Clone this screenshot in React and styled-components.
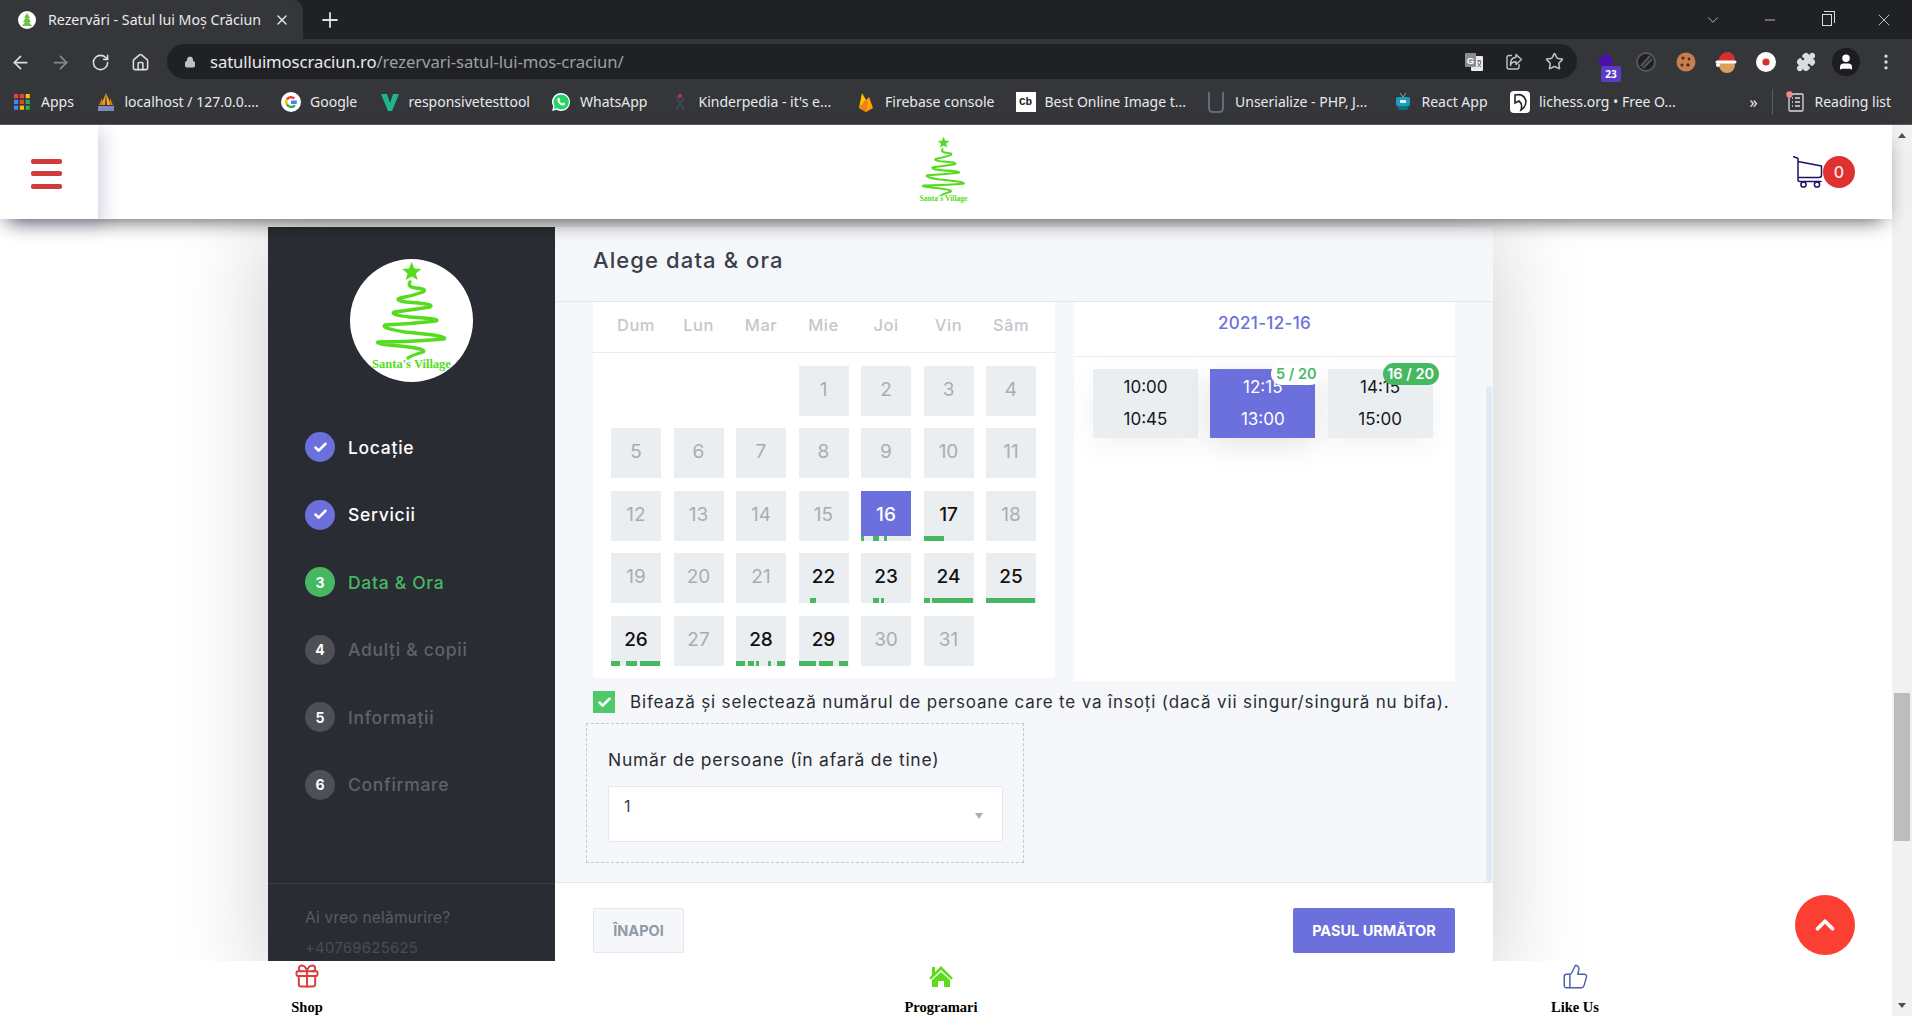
import React from "react";
import styled, { createGlobalStyle } from "styled-components";
import {
  ArrowLeft,
  ArrowRight,
  RotateCw,
  Home,
  Lock,
  Star,
  Puzzle,
  User,
  MoreVertical,
  ChevronDown,
  ChevronUp,
  Minus,
  X,
  Plus,
  Gift,
  ThumbsUp,
  Check,
} from "lucide-react";

const PURPLE = "#6c70dc";
const GREEN = "#47b862";
const CELL = "#ebeef1";
const UI_FONT = '"Inter", "Liberation Sans", sans-serif';
const CHROME_FONT = '"Noto Sans", "Liberation Sans", sans-serif';

const GlobalStyle = createGlobalStyle`
  html, body {
    margin: 0;
    height: 100%;
    overflow: hidden;
    background: #fff;
  }
  * { box-sizing: border-box; }
`;

const Shell = styled.div`
  display: flex;
  flex-direction: column;
  width: 1912px;
  height: 1016px;
  font-family: ${UI_FONT};
`;

/* browser chrome */
const TabStrip = styled.div`
  display: flex;
  align-items: center;
  height: 39px;
  background: #202124;
  color: #e8eaed;
  font-family: ${CHROME_FONT};
`;

const Tab = styled.div`
  display: flex;
  align-items: center;
  width: 303px;
  height: 39px;
  padding-left: 18px;
  background: #35363a;
  border-radius: 0 10px 0 0;
`;

const TabTitle = styled.span`
  width: 213px;
  margin-left: 12px;
  font-size: 14.2px;
  white-space: nowrap;
`;

const TabClose = styled.span`
  display: flex;
  margin-left: 13px;
`;

const NewTab = styled.span`
  display: flex;
  margin-left: 15px;
  color: #dfe1e5;
`;

const WindowControls = styled.div`
  display: flex;
  margin-left: auto;
`;

const WindowButton = styled.span`
  display: flex;
  align-items: center;
  justify-content: center;
  width: 57px;
  height: 28px;
  color: #dadce0;
`;

const RestoreIcon = styled.span`
  position: relative;
  width: 10px;
  height: 12px;
  border: 1.2px solid #dadce0;
  &::before {
    content: "";
    position: absolute;
    top: -4px;
    left: 1px;
    width: 10px;
    height: 11px;
    border-top: 1.2px solid #dadce0;
    border-right: 1.2px solid #dadce0;
  }
`;

const Toolbar = styled.div`
  display: flex;
  height: 40px;
  background: #35363a;
  color: #dadce0;
  font-family: ${CHROME_FONT};
`;

const NavButton = styled.span`
  display: flex;
  align-items: center;
  justify-content: center;
  flex: none;
  width: 40px;
  height: 46px;
  color: ${(p) => (p.$dim ? "#85888d" : "#dadce0")};
`;

const AddressPill = styled.div`
  display: flex;
  align-items: center;
  width: 1410px;
  height: 35px;
  margin: 5px 0 0 7px;
  padding: 0 3px 0 17px;
  background: #202124;
  border-radius: 18px;
`;

const Url = styled.div`
  margin-left: 14px;
  font-size: 16.7px;
  color: #9aa0a6;
  white-space: nowrap;
  letter-spacing: -0.1px;
  b {
    font-weight: 400;
    color: #e8eaed;
  }
`;

const PillActions = styled.div`
  display: flex;
  margin-left: auto;
`;

const PillButton = styled.span`
  display: flex;
  align-items: center;
  justify-content: center;
  width: 40px;
  color: #bdc1c6;
`;

const Extensions = styled.div`
  display: flex;
  margin-left: 9px;
`;

const ExtButton = styled.span`
  position: relative;
  display: flex;
  align-items: center;
  justify-content: center;
  width: 40px;
  height: 46px;
`;

const ExtBadge = styled.span`
  position: absolute;
  top: 27px;
  left: 15px;
  width: 20px;
  height: 16px;
  background: #5b3cc4;
  border-radius: 2px;
  color: #fff;
  font: 700 10px/16px ${CHROME_FONT};
  text-align: center;
`;

const Avatar = styled.span`
  display: flex;
  align-items: center;
  justify-content: center;
  width: 28px;
  height: 28px;
  border-radius: 50%;
  background: #1c1d20;
  color: #fff;
`;

const Bookmarks = styled.div`
  display: flex;
  align-items: center;
  gap: 21.5px;
  height: 46px;
  padding-left: 12px;
  background: #35363a;
  border-bottom: 1px solid #5c5d61;
  color: #e8eaed;
  font-family: ${CHROME_FONT};
`;

const Bookmark = styled.div`
  display: flex;
  align-items: center;
  gap: 9px;
`;

const BookmarkLabel = styled.span`
  display: block;
  width: ${(p) => p.$w}px;
  font-size: 14px;
  white-space: nowrap;
`;

const ReadingLabel = styled(BookmarkLabel)`
  margin-left: 9px;
`;

const BookmarkIcon = styled.span`
  display: flex;
  align-items: center;
  justify-content: center;
  flex: none;
  width: 20px;
  height: 20px;
`;

const CbIcon = styled.span`
  width: 20px;
  height: 20px;
  background: #fff;
  color: #222;
  font: 700 11px/20px "Liberation Mono", monospace;
  text-align: center;
`;

const ReadingList = styled.div`
  display: flex;
  align-items: center;
  margin-left: 46px;
`;

const More = styled.span`
  width: 18px;
  font-size: 16px;
  text-align: center;
`;

const BarSeparator = styled.span`
  width: 1px;
  height: 26px;
  margin: 0 13px 0 9px;
  background: #5c5d61;
`;

/* page */
const Content = styled.div`
  display: flex;
  flex: 1;
  min-height: 0;
`;

const Page = styled.div`
  position: relative;
  display: flex;
  flex-direction: column;
  flex: 1;
  min-width: 0;
  background: #fff;
`;

const SiteHeader = styled.header`
  position: relative;
  z-index: 3;
  display: grid;
  grid-template-columns: 1fr 75px 1fr;
  align-items: center;
  height: 94px;
  padding-right: 5px;
  background: #fff;
  box-shadow: 0 9px 20px -9px rgba(0, 0, 0, 0.75);
`;

const MenuButton = styled.div`
  display: flex;
  flex-direction: column;
  justify-content: center;
  gap: 7.5px;
  width: 98px;
  height: 94px;
  padding: 3px 0 0 31px;
  background: #fff;
  box-shadow: 6px 6px 16px rgba(70, 70, 140, 0.22);
`;

const MenuBar = styled.span`
  width: 31px;
  height: 5px;
  background: #d33a3a;
  border-radius: 2px;
`;

const CartWrap = styled.div`
  display: flex;
  align-items: center;
  justify-self: end;
  margin-right: 32px;
`;

const CartCount = styled.span`
  width: 32px;
  height: 32px;
  border-radius: 50%;
  background: #e03131;
  color: #fbe9e9;
  font-size: 16px;
  font-weight: 500;
  line-height: 32px;
  text-align: center;
`;

const Stage = styled.main`
  flex: 1;
  min-height: 0;
  padding: 8px 0 0 268px;
  overflow: hidden;
`;

const Wizard = styled.div`
  display: grid;
  grid-template-columns: 287px 938px;
  width: 1225px;
  height: 760px;
  box-shadow: 0 0 90px rgba(0, 0, 0, 0.2);
`;

const Sidebar = styled.aside`
  display: flex;
  flex-direction: column;
  background: #292c32;
`;

const SideLogo = styled.div`
  width: 123px;
  height: 123px;
  margin: 32px auto 0;
  border-radius: 50%;
  background: #fff;
`;

const Steps = styled.ol`
  display: flex;
  flex-direction: column;
  gap: 37.6px;
  margin: 50px 0 0;
  padding: 0 0 0 37px;
  list-style: none;
`;

const StepRow = styled.li`
  display: flex;
  align-items: center;
  gap: 13px;
  height: 30px;
`;

const stepDot = { done: PURPLE, current: GREEN, todo: "#4d5056" };
const stepText = { done: "#ffffff", current: GREEN, todo: "#5f636b" };

const StepDot = styled.span`
  display: flex;
  align-items: center;
  justify-content: center;
  width: 30px;
  height: 30px;
  border-radius: 50%;
  background: ${(p) => stepDot[p.$state]};
  color: #fff;
  font-size: 14px;
  font-weight: 700;
`;

const StepLabel = styled.span`
  color: ${(p) => stepText[p.$state]};
  font-size: 17.5px;
  font-weight: 500;
  letter-spacing: 0.7px;
`;

const SideFooter = styled.div`
  height: 104px;
  margin-top: auto;
  padding: 23px 0 0 37px;
  border-top: 1px solid #3c3f45;
`;

const HelpTitle = styled.div`
  color: #585c64;
  font-size: 15.5px;
  letter-spacing: 0.2px;
  line-height: 22px;
`;

const HelpPhone = styled.div`
  margin-top: 8px;
  color: #494c53;
  font-size: 15px;
  letter-spacing: 0.2px;
  line-height: 22px;
`;

const Main = styled.section`
  display: flex;
  flex-direction: column;
  background: #fff;
`;

const MainTitle = styled.h2`
  display: flex;
  align-items: center;
  height: 75px;
  margin: 0;
  padding: 0 0 8px 38px;
  background: #f5f7fb;
  border-bottom: 1px solid #e3e7ee;
  color: #3a3f4a;
  font-size: 22px;
  font-weight: 500;
  letter-spacing: 1.1px;
`;

const MainBody = styled.div`
  position: relative;
  height: 581px;
  padding: 0 38px;
  background: #f5f7fb;
  border-bottom: 1px solid #e3e7ee;
`;

const InnerScroll = styled.span`
  position: absolute;
  top: 84px;
  right: 1px;
  width: 6px;
  height: 496px;
  border-radius: 3px;
  background: #e3eaf5;
`;

const Panels = styled.div`
  display: grid;
  grid-template-columns: 462px 381px;
  gap: 19px;
  align-items: start;
`;

const CalendarPanel = styled.div`
  height: 376px;
  background: #fff;
`;

const WeekHeader = styled.div`
  display: grid;
  grid-template-columns: repeat(7, 50px);
  column-gap: 12.5px;
  align-items: center;
  height: 51px;
  padding: 0 0 4px 18px;
  border-bottom: 1px solid #e9edf3;
`;

const WeekDay = styled.span`
  color: #c4c7cc;
  font-size: 16.5px;
  font-weight: 500;
  letter-spacing: 0.5px;
  text-align: center;
`;

const DayGrid = styled.div`
  display: grid;
  grid-template-columns: repeat(7, 50px);
  grid-auto-rows: 50px;
  gap: 12.5px;
  padding: 12.5px 0 0 18px;
`;

const DayCell = styled.div`
  position: relative;
  background: ${(p) => (p.$selected ? `linear-gradient(${PURPLE} 45px, ${CELL} 45px)` : CELL)};
  color: ${(p) => (p.$selected ? "#fff" : p.$open ? "#111" : "#a9adb2")};
  font-size: 19px;
  font-weight: ${(p) => (p.$open || p.$selected ? 500 : 400)};
  line-height: 48px;
  text-align: center;
`;

const SegTrack = styled.div`
  position: absolute;
  right: 0;
  bottom: 0;
  left: 0;
  display: flex;
  height: 5px;
`;

const Seg = styled.span`
  flex: none;
  width: ${(p) => p.$w}px;
  margin-left: ${(p) => p.$gap}px;
  background: ${GREEN};
`;

const SlotsPanel = styled.div`
  height: 379px;
  background: #fff;
`;

const SlotsDate = styled.div`
  height: 55px;
  padding-top: 8px;
  border-bottom: 1px solid #e9edf3;
  color: ${PURPLE};
  font-size: 17px;
  font-weight: 500;
  letter-spacing: 0.3px;
  line-height: 26px;
  text-align: center;
`;

const SlotsRow = styled.div`
  display: flex;
  gap: 12.3px;
  padding: 12px 0 0 19px;
`;

const Slot = styled.div`
  position: relative;
  display: flex;
  flex-direction: column;
  justify-content: center;
  width: 105px;
  height: 69px;
  padding-bottom: 2px;
  background: ${(p) => (p.$selected ? PURPLE : CELL)};
  color: ${(p) => (p.$selected ? "#fff" : "#15171a")};
  font-size: 17px;
  line-height: 32px;
  text-align: center;
  box-shadow: 0 8px 28px rgba(0, 0, 0, ${(p) => (p.$selected ? 0.1 : 0.05)});
`;

const SlotBadge = styled.span`
  position: absolute;
  top: -6px;
  right: -6px;
  width: ${(p) => p.$w}px;
  height: 22px;
  border-radius: 11px;
  background: ${(p) => (p.$filled ? GREEN : "#fff")};
  color: ${(p) => (p.$filled ? "#fff" : GREEN)};
  font-size: 14.5px;
  font-weight: 600;
  line-height: 22px;
`;

const CompanionRow = styled.label`
  display: flex;
  align-items: center;
  gap: 15px;
  height: 22px;
  margin-top: 10px;
  color: #292d32;
  font-size: 17px;
  letter-spacing: 0.85px;
  line-height: 24px;
  white-space: nowrap;
`;

const CheckBox = styled.span`
  display: flex;
  align-items: center;
  justify-content: center;
  flex: none;
  width: 22px;
  height: 22px;
  background: #4fc96a;
  color: #fff;
`;

const CompanionBox = styled.div`
  width: 438px;
  height: 140px;
  margin: 10px 0 0 -7px;
  padding: 23px 20px 0 21px;
  border: 1px dashed #c3c8cf;
`;

const FieldLabel = styled.div`
  color: #292d32;
  font-size: 17.5px;
  letter-spacing: 0.75px;
  line-height: 25px;
  white-space: nowrap;
`;

const SelectBox = styled.div`
  position: relative;
  height: 56px;
  margin-top: 14px;
  padding: 7px 15px;
  background: #fff;
  border: 1px solid #e3e7ee;
  border-radius: 2px;
  color: #3a3f4a;
  font-size: 16px;
  line-height: 25px;
  &::after {
    content: "";
    position: absolute;
    top: 26px;
    right: 19px;
    border-top: 6px solid #a5b0bd;
    border-right: 4.5px solid transparent;
    border-left: 4.5px solid transparent;
  }
`;

const MainFooter = styled.div`
  display: flex;
  justify-content: space-between;
  padding: 25px 38px 0;
  background: #fff;
`;

const BackButton = styled.button`
  width: 91px;
  height: 45px;
  padding: 0;
  background: #f5f7fb;
  border: 1px solid #e3e7ee;
  border-radius: 2px;
  color: #8f9aa5;
  font: 700 14.5px ${UI_FONT};
`;

const NextButton = styled.button`
  width: 162px;
  height: 45px;
  padding: 0;
  background: ${PURPLE};
  border: none;
  border-radius: 2px;
  color: #fff;
  font: 700 14.5px ${UI_FONT};
`;

const BottomNav = styled.nav`
  position: relative;
  z-index: 2;
  display: flex;
  justify-content: space-between;
  height: 55px;
  padding: 2px 277px 0 267px;
  background: #fff;
`;

const NavItem = styled.div`
  display: flex;
  flex-direction: column;
  align-items: center;
  width: 80px;
`;

const NavIcon = styled.span`
  display: flex;
  align-items: center;
  justify-content: center;
  height: 26px;
`;

const NavLabel = styled.span`
  margin-top: 11px;
  color: #000;
  font-family: "Liberation Serif", serif;
  font-size: 14.5px;
  font-weight: 700;
  line-height: 14px;
  white-space: nowrap;
`;

const ToTop = styled.span`
  position: absolute;
  z-index: 4;
  right: 37px;
  bottom: 61px;
  display: flex;
  align-items: center;
  justify-content: center;
  width: 60px;
  height: 60px;
  border-radius: 50%;
  background: #fb4033;
  color: #fff;
`;

const PageScrollbar = styled.div`
  display: flex;
  flex-direction: column;
  align-items: center;
  width: 20px;
  padding-top: 8px;
  background: #f1f1f1;
`;

const ScrollArrow = styled.span`
  border-right: 4px solid transparent;
  border-left: 4px solid transparent;
  border-${(p) => (p.$up ? "bottom" : "top")}: 5px solid #505050;
`;

const ScrollThumb = styled.span`
  width: 16px;
  height: 148px;
  margin: 555px 0 auto;
  background: #bdbdbd;
`;

const ScrollArrowDown = styled(ScrollArrow)`
  margin-bottom: 8px;
`;

/* drawings */
function TreeLogo({ size }) {
  return (
    <svg width={size} height={size} viewBox="0 0 123 123">
      <polygon
        fill="#55dc1e"
        points="61.7,3 64.4,9.6 71.2,10 65.9,14.4 67.6,21 61.7,17.4 55.8,21 57.5,14.4 52.2,10 59,9.6"
      />
      <path
        fill="none"
        stroke="#55dc1e"
        strokeWidth="3.4"
        strokeLinecap="round"
        strokeLinejoin="round"
        d="M60 23 Q57 28 66 29 Q78 30 73 33 Q62 37 50 39 Q44 41 56 43 Q86 45 80 48 Q60 51 44 53 Q40 56 60 58 Q92 60 86 62 Q60 65 35 66 Q30 69 55 73 Q100 77 94 80 Q60 83 28 83 Q25 85 50 87 Q78 90 73 93 Q60 97 58 99"
      />
      <text
        x="61.5"
        y="109"
        fill="#55dc1e"
        fontFamily="Liberation Serif, serif"
        fontSize="12.5"
        fontWeight="700"
        textAnchor="middle"
      >
        Santa's Village
      </text>
    </svg>
  );
}

function CartIcon() {
  return (
    <svg width="30" height="32" viewBox="0 0 30 32" fill="none" stroke="#1a1464" strokeWidth="1.5" strokeLinejoin="round">
      <path d="M0.5 0.5 L5 2.5 L5 24 Q5 25.5 7 25.5 L28 25.5" strokeLinecap="round" />
      <path d="M5 5.5 L28.5 10 L28.5 19 Q28.5 21.5 26 21.5 L5 21.5" />
      <circle cx="10.5" cy="28.5" r="2.6" />
      <circle cx="24" cy="28.5" r="2.6" />
    </svg>
  );
}

function AppsIcon() {
  const colors = ["#ea4335", "#ea4335", "#fbbc05", "#4285f4", "#ea4335", "#34a853", "#4285f4", "#fbbc05", "#34a853"];
  return (
    <svg width="16" height="16" viewBox="0 0 16 16">
      {colors.map((c, i) => (
        <rect key={i} x={(i % 3) * 5.8} y={Math.floor(i / 3) * 5.8} width="4.2" height="4.2" fill={c} />
      ))}
    </svg>
  );
}

function PmaIcon() {
  return (
    <svg width="20" height="20" viewBox="0 0 20 20">
      <path d="M10 1 L5 13 H9 Z" fill="#f29a1d" />
      <path d="M10 1 L15 13 H11 Z" fill="#f2b01d" />
      <path d="M3 13 L6 6 L7 13 Z M17 13 L14 6 L13 13 Z" fill="#d9781a" />
      <rect x="2" y="14" width="16" height="5" fill="#7b8cbc" />
    </svg>
  );
}

function GoogleIcon() {
  return (
    <svg width="20" height="20" viewBox="0 0 20 20">
      <circle cx="10" cy="10" r="10" fill="#fff" />
      <path d="M10 8.5h5.8c.1.5.1 1 .1 1.5 0 .7-.1 1.3-.3 1.9H10z" fill="#4285f4" />
      <path d="M14.2 5.8A6 6 0 0 0 5 6.7l2 1.6a3.5 3.5 0 0 1 5.5-.8z" fill="#ea4335" />
      <path d="M5 6.7a6 6 0 0 0 0 6.6l2-1.6a3.5 3.5 0 0 1 0-3.4z" fill="#fbbc05" />
      <path d="M5 13.3a6 6 0 0 0 9.8.6l-1.8-1.5a3.5 3.5 0 0 1-6-.7z" fill="#34a853" />
    </svg>
  );
}

function VeeIcon() {
  return (
    <svg width="20" height="20" viewBox="0 0 20 20">
      <path d="M1 2 H7 L10 11 L13 2 H19 L12 19 H8 Z" fill="#1fb58f" />
    </svg>
  );
}

function WhatsAppIcon() {
  return (
    <svg width="20" height="20" viewBox="0 0 20 20">
      <path d="M10 1a9 9 0 0 0-7.7 13.6L1 19l4.5-1.2A9 9 0 1 0 10 1z" fill="#fff" />
      <path d="M10 2.5a7.5 7.5 0 0 0-6.3 11.4l-.8 3.1 3.2-.8A7.5 7.5 0 1 0 10 2.5z" fill="#25d366" />
      <path d="M7.4 5.9c-.8.4-1.4 1.5-.9 3 .7 2 2.3 3.6 4.4 4.4 1.4.5 2.6 0 3-.9l.2-1-2-1-.9 1c-1.2-.4-2.3-1.5-2.8-2.8l.9-.9-1-2z" fill="#fff" />
    </svg>
  );
}

function KinderIcon() {
  return (
    <svg width="18" height="20" viewBox="0 0 18 20">
      <path d="M5 4 L13 18 M13 6 L5 18" stroke="#3c4554" strokeWidth="2.4" fill="none" />
      <circle cx="9" cy="4" r="2.2" fill="#b0324a" />
    </svg>
  );
}

function FirebaseIcon() {
  return (
    <svg width="20" height="22" viewBox="0 0 20 22">
      <path d="M3 17 L6 2 L10 9 Z" fill="#ffc400" />
      <path d="M3 17 L13 6 L17 17 L10 21 Z" fill="#ffa000" />
      <path d="M3 17 L10 9 L12 12 L10 21 Z" fill="#f57f17" />
    </svg>
  );
}

function UnserializeIcon() {
  return (
    <svg width="18" height="22" viewBox="0 0 18 22" fill="none" stroke="#5d6f7b" strokeWidth="2">
      <path d="M2 1 V17 Q2 21 6 21 H12 Q16 21 16 17 V1" />
    </svg>
  );
}

function ReactTvIcon() {
  return (
    <svg width="18" height="20" viewBox="0 0 18 20">
      <rect x="2" y="5" width="14" height="9" rx="2" fill="#19a0b8" />
      <path d="M3 14 H15 L13 18 H5 Z" fill="#0f6f84" />
      <path d="M6 1 L9 5 L12 1" stroke="#8fa0a8" strokeWidth="1" fill="none" />
      <rect x="6" y="8" width="6" height="3" fill="#d6f2f7" />
    </svg>
  );
}

function LichessIcon() {
  return (
    <svg width="20" height="22" viewBox="0 0 20 22">
      <rect width="20" height="22" rx="4" fill="#fff" />
      <path d="M5 4 Q14 2 16 10 Q16 16 11 19 Q13 13 9 10 L5 12 Z" fill="none" stroke="#222" strokeWidth="1.6" />
    </svg>
  );
}

function ReadingIcon() {
  return (
    <svg width="20" height="22" viewBox="0 0 20 22" fill="none" stroke="#dadce0" strokeWidth="1.3">
      <rect x="3" y="3" width="14" height="17" rx="1" />
      <path d="M6 7h1M9 7h5M6 11h1M9 11h5M6 15h1M9 15h5" />
      <circle cx="3.5" cy="3.5" r="3.2" fill="#f28b82" stroke="none" />
    </svg>
  );
}

function FaviconTree() {
  return (
    <svg width="18" height="18" viewBox="0 0 18 18">
      <circle cx="9" cy="9" r="9" fill="#fff" />
      <path d="M9 2 L12 7 H10.5 L13 11 H11 L14 15 H4 L7 11 H5 L7.5 7 H6 Z" fill="#6fc24a" />
    </svg>
  );
}

function TranslateIcon() {
  return (
    <svg width="20" height="20" viewBox="0 0 20 20">
      <rect x="7" y="4" width="12" height="15" rx="1" fill="#e8eaed" />
      <rect x="1" y="1" width="11" height="14" rx="1" fill="#8a8d92" />
      <text x="6.5" y="11.5" fill="#fff" fontFamily="Liberation Sans, sans-serif" fontSize="9.5" fontWeight="700" textAnchor="middle">
        G
      </text>
      <path d="M13 9h4M15 8v1.5M13.6 15c2-1.2 3-3 3.2-5.5M14 11c.6 1.6 1.6 3 3 4" stroke="#5f6368" strokeWidth="1" fill="none" />
    </svg>
  );
}

function ShareBoxIcon() {
  return (
    <svg width="20" height="20" viewBox="0 0 20 20" fill="none" stroke="#bdc1c6" strokeWidth="1.4" strokeLinejoin="round">
      <path d="M8 3.5 H5 Q3 3.5 3 5.5 V15 Q3 17 5 17 H13 Q15 17 15 15 V12" />
      <path d="M12 2.5 L17.5 7.5 L12 12.5 V9.7 Q7.5 9.5 6.5 13.5 Q6 6 12 5.3 Z" />
    </svg>
  );
}

function ExtTimer() {
  return (
    <svg width="20" height="22" viewBox="0 0 20 22">
      <path d="M10 1 L18 10 L10 20 L2 10 Z" fill="#4b12a8" />
    </svg>
  );
}

function ExtDark() {
  return (
    <svg width="22" height="22" viewBox="0 0 22 22" fill="none" stroke="#55575c" strokeWidth="2">
      <circle cx="11" cy="11" r="9" fill="#202124" />
      <path d="M6 15 L15 5 M8 17 L17 8" />
    </svg>
  );
}

function ExtCookie() {
  return (
    <svg width="22" height="22" viewBox="0 0 22 22">
      <circle cx="11" cy="11" r="9.5" fill="#c77f4e" />
      <circle cx="8" cy="7" r="1.6" fill="#4c2a17" />
      <circle cx="14" cy="8" r="1.4" fill="#4c2a17" />
      <circle cx="7" cy="14" r="1.5" fill="#4c2a17" />
      <circle cx="13" cy="14" r="1.7" fill="#4c2a17" />
    </svg>
  );
}

function ExtSanta() {
  return (
    <svg width="22" height="24" viewBox="0 0 22 24">
      <circle cx="12" cy="15" r="8" fill="#d9a05b" />
      <path d="M3 11 Q6 1 14 2 Q20 4 20 11 Z" fill="#d9302b" />
      <path d="M2 12 H20" stroke="#fff" strokeWidth="3" strokeLinecap="round" />
      <circle cx="3" cy="15" r="2" fill="#fff" />
    </svg>
  );
}

function ExtRecord() {
  return (
    <svg width="22" height="22" viewBox="0 0 22 22">
      <circle cx="11" cy="11" r="10" fill="#fff" />
      <circle cx="11" cy="11" r="3.6" fill="#d9302b" />
    </svg>
  );
}

function HomeFilled() {
  return (
    <svg width="26" height="24" viewBox="0 0 26 24">
      <path fill="#5cdc1c" d="M13 2 L25 14 L23 15.5 L13 6 L3 15.5 L1 14 L4 11 V3 H7 V8 Z" />
      <path fill="#5cdc1c" d="M13 8 L22 16 V23 H16 V17 H10 V23 H4 V16 Z" />
    </svg>
  );
}

const bookmarks = [
  { icon: <AppsIcon />, label: "Apps", w: 33 },
  { icon: <PmaIcon />, label: "localhost / 127.0.0....", w: 135 },
  { icon: <GoogleIcon />, label: "Google", w: 48 },
  { icon: <VeeIcon />, label: "responsivetesttool", w: 121 },
  { icon: <WhatsAppIcon />, label: "WhatsApp", w: 68 },
  { icon: <KinderIcon />, label: "Kinderpedia - it's e...", w: 136 },
  { icon: <FirebaseIcon />, label: "Firebase console", w: 109 },
  { icon: <CbIcon>Cb</CbIcon>, label: "Best Online Image t...", w: 140 },
  { icon: <UnserializeIcon />, label: "Unserialize - PHP, J...", w: 136 },
  { icon: <ReactTvIcon />, label: "React App", w: 67 },
  { icon: <LichessIcon />, label: "lichess.org • Free O...", w: 138 },
];

const steps = [
  { n: 1, label: "Locație", state: "done" },
  { n: 2, label: "Servicii", state: "done" },
  { n: 3, label: "Data & Ora", state: "current" },
  { n: 4, label: "Adulți & copii", state: "todo" },
  { n: 5, label: "Informații", state: "todo" },
  { n: 6, label: "Confirmare", state: "todo" },
];

const weekDays = ["Dum", "Lun", "Mar", "Mie", "Joi", "Vin", "Sâm"];

// booked parts of each open day as [gap before, width] in px
const daySegments = {
  16: [[0, 3], [9, 6], [5, 3]],
  17: [[0, 20]],
  22: [[11, 6]],
  23: [[12, 6], [2, 3]],
  24: [[0, 6], [2, 41]],
  25: [[0, 49]],
  26: [[0, 9], [6, 11], [3, 20]],
  28: [[0, 9], [3, 6], [2, 3], [9, 3], [6, 8]],
  29: [[0, 17], [3, 14], [6, 9]],
};

const days = Array.from({ length: 31 }, (_, i) => i + 1);

export default function App() {
  return (
    <Shell>
      <GlobalStyle />
      <TabStrip>
        <Tab>
          <FaviconTree />
          <TabTitle>Rezervări - Satul lui Moș Crăciun</TabTitle>
          <TabClose>
            <X size={16} />
          </TabClose>
        </Tab>
        <NewTab>
          <Plus size={24} strokeWidth={1.8} />
        </NewTab>
        <WindowControls>
          <WindowButton>
            <ChevronDown size={18} strokeWidth={1} />
          </WindowButton>
          <WindowButton>
            <Minus size={16} strokeWidth={1.2} />
          </WindowButton>
          <WindowButton>
            <RestoreIcon />
          </WindowButton>
          <WindowButton>
            <X size={20} strokeWidth={1} />
          </WindowButton>
        </WindowControls>
      </TabStrip>

      <Toolbar>
        <NavButton>
          <ArrowLeft size={21} />
        </NavButton>
        <NavButton $dim>
          <ArrowRight size={21} />
        </NavButton>
        <NavButton>
          <RotateCw size={19} />
        </NavButton>
        <NavButton>
          <Home size={19} />
        </NavButton>
        <AddressPill>
          <Lock size={12} fill="#bdc1c6" color="#bdc1c6" />
          <Url>
            <b>satulluimoscraciun.ro</b>/rezervari-satul-lui-mos-craciun/
          </Url>
          <PillActions>
            <PillButton>
              <TranslateIcon />
            </PillButton>
            <PillButton>
              <ShareBoxIcon />
            </PillButton>
            <PillButton>
              <Star size={19} />
            </PillButton>
          </PillActions>
        </AddressPill>
        <Extensions>
          <ExtButton>
            <ExtTimer />
            <ExtBadge>23</ExtBadge>
          </ExtButton>
          <ExtButton>
            <ExtDark />
          </ExtButton>
          <ExtButton>
            <ExtCookie />
          </ExtButton>
          <ExtButton>
            <ExtSanta />
          </ExtButton>
          <ExtButton>
            <ExtRecord />
          </ExtButton>
          <ExtButton>
            <Puzzle size={20} fill="#dadce0" color="#dadce0" />
          </ExtButton>
          <ExtButton>
            <Avatar>
              <User size={18} fill="#fff" />
            </Avatar>
          </ExtButton>
          <ExtButton>
            <MoreVertical size={20} color="#dadce0" />
          </ExtButton>
        </Extensions>
      </Toolbar>

      <Bookmarks>
        {bookmarks.map((b) => (
          <Bookmark key={b.label}>
            <BookmarkIcon>{b.icon}</BookmarkIcon>
            <BookmarkLabel $w={b.w}>{b.label}</BookmarkLabel>
          </Bookmark>
        ))}
        <ReadingList>
          <More>»</More>
          <BarSeparator />
          <BookmarkIcon>
            <ReadingIcon />
          </BookmarkIcon>
          <ReadingLabel $w={78}>Reading list</ReadingLabel>
        </ReadingList>
      </Bookmarks>

      <Content>
        <Page>
          <SiteHeader>
            <MenuButton>
              <MenuBar />
              <MenuBar />
              <MenuBar />
            </MenuButton>
            <TreeLogo size={75} />
            <CartWrap>
              <CartIcon />
              <CartCount>0</CartCount>
            </CartWrap>
          </SiteHeader>

          <Stage>
            <Wizard>
              <Sidebar>
                <SideLogo>
                  <TreeLogo size={123} />
                </SideLogo>
                <Steps>
                  {steps.map((s) => (
                    <StepRow key={s.n}>
                      <StepDot $state={s.state}>
                        {s.state === "done" ? <Check size={15} strokeWidth={4} /> : s.n}
                      </StepDot>
                      <StepLabel $state={s.state}>{s.label}</StepLabel>
                    </StepRow>
                  ))}
                </Steps>
                <SideFooter>
                  <HelpTitle>Ai vreo nelămurire?</HelpTitle>
                  <HelpPhone>+40769625625</HelpPhone>
                </SideFooter>
              </Sidebar>

              <Main>
                <MainTitle>Alege data &amp; ora</MainTitle>
                <MainBody>
                  <Panels>
                    <CalendarPanel>
                      <WeekHeader>
                        {weekDays.map((d) => (
                          <WeekDay key={d}>{d}</WeekDay>
                        ))}
                      </WeekHeader>
                      <DayGrid>
                        <span />
                        <span />
                        <span />
                        {days.map((d) => {
                          const segments = daySegments[d];
                          return (
                            <DayCell key={d} $open={!!segments} $selected={d === 16}>
                              {d}
                              {segments && (
                                <SegTrack>
                                  {segments.map(([gap, w], i) => (
                                    <Seg key={i} $gap={gap} $w={w} />
                                  ))}
                                </SegTrack>
                              )}
                            </DayCell>
                          );
                        })}
                      </DayGrid>
                    </CalendarPanel>

                    <SlotsPanel>
                      <SlotsDate>2021-12-16</SlotsDate>
                      <SlotsRow>
                        <Slot>
                          <span>10:00</span>
                          <span>10:45</span>
                        </Slot>
                        <Slot $selected>
                          <span>12:15</span>
                          <span>13:00</span>
                          <SlotBadge $w={50}>5 / 20</SlotBadge>
                        </Slot>
                        <Slot>
                          <span>14:15</span>
                          <span>15:00</span>
                          <SlotBadge $w={56} $filled>
                            16 / 20
                          </SlotBadge>
                        </Slot>
                      </SlotsRow>
                    </SlotsPanel>
                  </Panels>

                  <CompanionRow>
                    <CheckBox>
                      <Check size={15} strokeWidth={4} />
                    </CheckBox>
                    Bifează și selectează numărul de persoane care te va însoți (dacă vii singur/singură nu bifa).
                  </CompanionRow>

                  <CompanionBox>
                    <FieldLabel>Număr de persoane (în afară de tine)</FieldLabel>
                    <SelectBox>1</SelectBox>
                  </CompanionBox>
                  <InnerScroll />
                </MainBody>
                <MainFooter>
                  <BackButton>ÎNAPOI</BackButton>
                  <NextButton>PASUL URMĂTOR</NextButton>
                </MainFooter>
              </Main>
            </Wizard>
          </Stage>

          <BottomNav>
            <NavItem>
              <NavIcon>
                <Gift size={28} color="#d8403f" strokeWidth={1.7} />
              </NavIcon>
              <NavLabel>Shop</NavLabel>
            </NavItem>
            <NavItem>
              <NavIcon>
                <HomeFilled />
              </NavIcon>
              <NavLabel>Programari</NavLabel>
            </NavItem>
            <NavItem>
              <NavIcon>
                <ThumbsUp size={27} color="#4a63a8" strokeWidth={1.3} />
              </NavIcon>
              <NavLabel>Like Us</NavLabel>
            </NavItem>
          </BottomNav>

          <ToTop>
            <ChevronUp size={30} strokeWidth={3} />
          </ToTop>
        </Page>

        <PageScrollbar>
          <ScrollArrow $up />
          <ScrollThumb />
          <ScrollArrowDown />
        </PageScrollbar>
      </Content>
    </Shell>
  );
}
